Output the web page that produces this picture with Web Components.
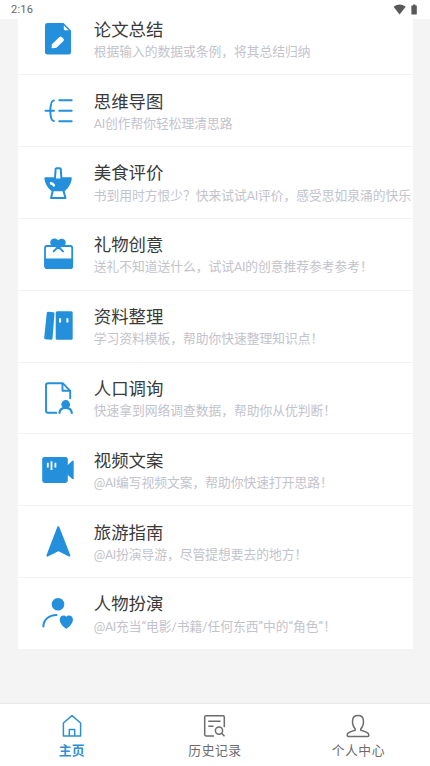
<!DOCTYPE html>
<html lang="zh-CN">
<head>
<meta charset="utf-8">
<title>AI 助手</title>
<style>
html,body{margin:0;height:100%}
body{background:#f4f4f4;overflow:hidden;font-family:Roboto,"Noto Sans CJK SC",sans-serif}
</style>
</head>
<body>
<app-screen></app-screen>
<script>
const icons = {
  summary: `<path fill="currentColor" d="M9.5 4H25.5L33 11.5V33.2Q33 35.5 30.7 35.5H9.3Q7 35.5 7 33.2V6.3Q7 4 9.5 4Z"/><path d="M25.8 6.4V10.2Q25.8 11.2 26.8 11.2H30.6Z" fill="#fff"/><path fill="#fff" d="M14 25.2 21.4 17.9Q22.5 16.9 23.6 17.9L25.5 19.8Q26.5 20.9 25.5 21.9L18.4 28.8 14.4 29.3Q13.5 29.4 13.6 28.4Z"/>`,
  mind: `<g class="s" stroke-width="2"><path d="M21.3 9.3H33.7M21.3 19.7H33.7M21.3 30.2H33.7M7.5 19.7H16M15.8 9.4C13 9.4 12.5 14 12.3 19.7C12.5 25.4 13 30.1 15.8 30.1"/></g>`,
  food: `<path fill="currentColor" d="M7.5 14.3H32.6Q33.9 14.3 33.8 15.6C33.3 20 31 25 26.5 28.2H13.7C9.2 25 6.9 20 6.4 15.6Q6.3 14.3 7.5 14.3Z"/><path class="s" stroke-width="2" style="fill:#fff" d="M17 15.6 17.6 6.2Q17.7 5.2 18.7 5.2H21.7Q22.7 5.2 22.8 6.2L23.4 15.6"/><path class="s" stroke-width="2" d="M14.6 28.5 13 35H27.5L25.7 28.5"/><path d="M13 20.4Q14.6 20.5 15.8 22.3" stroke="#fff" stroke-width="2.6" fill="none" stroke-linecap="round"/>`,
  gift: `<rect class="s" stroke-width="1.8" x="7" y="12" width="27.2" height="22" rx="2"/><path fill="currentColor" d="M6.5 24.5H35V32Q35 35 32.5 35H9Q6.5 35 6.5 32ZM20.2 6.2C17.5 3 12.4 4.3 12.2 8.4C12.1 11.5 15.2 13 20.2 14C25.2 13 28.2 11 27.7 7.8C27 4.3 22.4 3.6 20.2 6.2Z"/><path class="s" stroke-width="2" d="M15.6 17.4 20.3 12.8 25 17.4"/>`,
  books: `<path fill="currentColor" d="M10.2 5.7 15.6 6.3Q16.6 6.5 16.5 7.5L14.5 32.4Q14.4 33.8 13 33.7L7.3 33.2Q6 33 6.2 31.7L8.8 6.8Q9 5.6 10.2 5.7Z"/><rect x="17.7" y="5.3" width="17" height="28.5" rx="1.5" fill="currentColor"/><path stroke="#fff" stroke-width="2" d="M22.1 12.2V16.4M29.4 12.2V16.4"/>`,
  survey: `<g class="s" stroke-width="1.9"><path d="M18.3 34.7H10Q8 34.7 8 32.7V7.2Q8 5.2 10 5.2H24.7L32.2 12.8V20.3"/><path d="M24.5 5.6V12.7H31.8"/><path stroke-width="2.2" d="M21.5 35C21.7 31.6 23.5 29.9 27.6 29.9S33.5 31.6 33.8 35"/></g><circle cx="27.7" cy="26.5" r="4.4" fill="currentColor"/>`,
  video: `<rect x="4.2" y="6.9" width="25.6" height="26" rx="2.3" fill="currentColor"/><path fill="currentColor" d="M29 15.8 34 11Q35.7 9.9 35.7 12V28Q35.7 30 34 28.8L29 24.2Z"/><path stroke="#fff" stroke-width="1.8" d="M9.8 12.7V17.6M13.5 11.2V20M17.4 12.7V17.6" fill="none"/>`,
  travel: `<path fill="currentColor" stroke="currentColor" stroke-linejoin="round" stroke-width="2" d="M20.3 5.2 31.4 33.6 20.4 28 9.4 33.6Z"/>`,
  role: `<circle cx="20" cy="10.2" r="6.3" fill="currentColor"/><path class="s" stroke-width="2" d="M5.4 32.6C5.3 25.7 11 21 18.5 20.9"/><path fill="currentColor" d="M28.3 22.8C26.4 20.4 21.7 21.2 21.7 25.7C21.7 29.2 25 32.5 28.3 34.8C31.6 32.5 34.9 29.2 34.9 25.7C34.9 21.2 30.2 20.4 28.3 22.8Z"/>`,
  home: `<path class="m" d="M6.4 11 15 3.6 23.6 11V24H6.4ZM12.3 24V17.4H17.7V24"/>`,
  history: `<path class="m" d="M14 24H6Q4.7 24 4.7 22.6V5.2Q4.7 3.8 6 3.8H23Q24.3 3.8 24.3 5.2V15.2M8.3 9.2H20.6M8.3 14.3H13.5"/><circle class="m" cx="19" cy="18.6" r="3.6"/><path class="m" d="M21.7 21.3 24.5 24.2"/>`,
  person: `<path class="m" d="M12.2 16.7C10.3 14.9 9.2 12.2 9.6 8.2C9.9 4.8 11.8 3.4 15 3.4S20.1 4.8 20.4 8.2C20.8 12.2 19.7 14.9 17.8 16.7V18.2C21.5 19.2 24.7 20.3 25.4 21.7Q26.4 24.4 24.9 24.4H5.1Q3.6 24.4 4.6 21.7C5.3 20.3 8.5 19.2 12.2 18.2Z"/>`
};

function define(name, render) {
  customElements.define(name, class extends HTMLElement {
    connectedCallback() {
      if (this.shadowRoot) return;
      this.attachShadow({mode: 'open'}).innerHTML = render(this);
    }
  });
}

define('app-icon', el => {
  const size = +(el.getAttribute('size') || 40);
  return `<style>
    :host{display:block;flex:none;width:${size}px;height:${size}px}
    svg{display:block}
    .s{fill:none;stroke:currentColor;stroke-linecap:round;stroke-linejoin:round}
    .m{fill:none;stroke:currentColor;stroke-width:1.5;stroke-linejoin:round}
  </style><svg width="${size}" height="${size}" viewBox="0 0 ${size} ${size}">${icons[el.getAttribute('name')]}</svg>`;
});

define('status-bar', () => `<style>
    :host{display:flex;flex:none;height:19px;box-sizing:border-box;padding:0 11px;justify-content:space-between;align-items:center;background:#fff;color:#666;font-size:11px;line-height:19px;letter-spacing:.2px}
    svg{display:block}
  </style><span>2:16</span>
  <svg width="27" height="12" viewBox="0 0 27 12"><path fill="#595959" d="M1.5 2.8Q7.6-1.6 13.7 2.8L7.6 10.4Z"/><path fill="#595959" d="M19.4 1.6H21V.4H23.4V1.6H24.8V10.6H19.4Z"/></svg>`);

define('feature-row', el => `<style>
    :host{display:flex;box-sizing:border-box;height:71.85px;padding:15.5px 0 0 20px;gap:16.3px;border-top:1px solid #f3f3f5}
    app-icon{color:#2490dc}
    .text{display:flex;flex-direction:column;white-space:nowrap}
    .title{font-size:17.4px;line-height:22px;margin-top:-.2px;color:#3a3a3a}
    .sub{font-size:12.76px;line-height:20px;margin-top:1.1px;color:#c3c3cc}
  </style><app-icon name="${el.getAttribute('icon')}"></app-icon>
  <div class="text"><div class="title"><slot name="title"></slot></div><div class="sub"><slot></slot></div></div>`);

define('feature-list', () => `<style>
    :host{display:block;width:395px;margin:-16.6px 0 0 17.5px;background:#fff}
  </style><slot></slot>`);

define('nav-item', el => `<style>
    :host{display:flex;flex:1;flex-direction:column;align-items:center;color:#6c6c6c;font-size:12.8px;line-height:18px;letter-spacing:.55px}
    :host([active]){color:#2f8fd0;font-weight:700;letter-spacing:0}
  </style><app-icon size="30" name="${el.getAttribute('icon')}"></app-icon><span><slot></slot></span>`);

define('nav-bar', () => `<style>
    :host{display:flex;flex:none;height:62px;box-sizing:border-box;padding-top:8px;background:#fff;box-shadow:0 -1px 1px #eaeaea}
  </style><slot></slot>`);

const rows = [
  ['summary','论文总结','根据输入的数据或条例，将其总结归纳'],
  ['mind','思维导图','AI创作帮你轻松理清思路'],
  ['food','美食评价','书到用时方恨少？快来试试AI评价，感受思如泉涌的快乐'],
  ['gift','礼物创意','送礼不知道送什么，试试AI的创意推荐参考参考！'],
  ['books','资料整理','学习资料模板，帮助你快速整理知识点！'],
  ['survey','人口调询','快速拿到网络调查数据，帮助你从优判断！'],
  ['video','视频文案','@AI编写视频文案，帮助你快速打开思路！'],
  ['travel','旅游指南','@AI扮演导游，尽管提想要去的地方！'],
  ['role','人物扮演','@AI充当“电影/书籍/任何东西”中的“角色”！']
];

// Latin runs are set slightly tighter than the Han text around them.
const tighten = s => s.replace(/@?AI/g, m => `<span class="latin">${m}</span>`);

define('app-screen', () => `<style>
    :host{display:flex;flex-direction:column;width:430px;height:766px;background:#f4f4f4}
    status-bar,nav-bar{z-index:1}
    main{flex:1;min-height:0;overflow:hidden;display:flow-root}
    .latin{letter-spacing:-.35px}
  </style><status-bar></status-bar>
  <main><feature-list>${rows.map(([i,t,s]) => `<feature-row icon="${i}"><span slot="title">${t}</span>${tighten(s)}</feature-row>`).join('')}</feature-list></main>
  <nav-bar><nav-item icon="home" active>主页</nav-item><nav-item icon="history">历史记录</nav-item><nav-item icon="person">个人中心</nav-item></nav-bar>`);
</script>
</body>
</html>
